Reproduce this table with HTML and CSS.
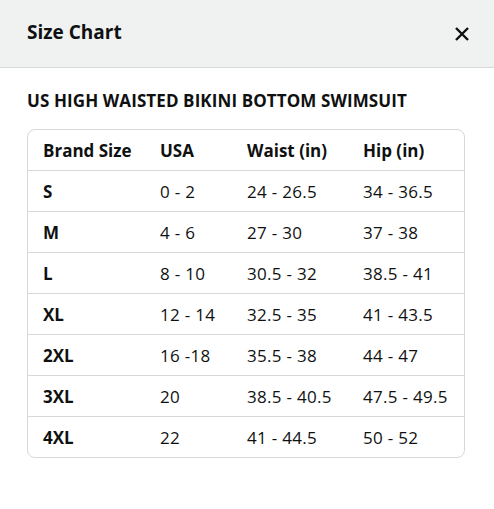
FILE: index.html
```html
<!DOCTYPE html>
<html lang="en">
<head>
    <meta charset="UTF-8">
    <meta name="viewport" content="width=device-width, initial-scale=1.0">
    <title>Size Chart</title>
    <link rel="stylesheet" href="styles.css">
</head>
<body>
    <div class="popover">
        <header class="popover-header">
            <h2>Size Chart</h2>
            <button class="close" aria-label="Close">
                <svg width="16" height="16" viewBox="0 0 16 16">
                    <path d="M2 2 L14 14 M14 2 L2 14" stroke="#0f1111" stroke-width="2.4" fill="none"/>
                </svg>
            </button>
        </header>
        <div class="popover-body">
            <h3 class="chart-title">US HIGH WAISTED BIKINI BOTTOM SWIMSUIT</h3>
            <div class="table-wrap">
                <table class="size-table">
                    <thead>
                        <tr>
                            <th class="c1">Brand Size</th>
                            <th class="c2">USA</th>
                            <th class="c3">Waist (in)</th>
                            <th class="c4">Hip (in)</th>
                        </tr>
                    </thead>
                    <tbody>
                        <tr><th>S</th><td>0 - 2</td><td>24 - 26.5</td><td>34 - 36.5</td></tr>
                        <tr><th>M</th><td>4 - 6</td><td>27 - 30</td><td>37 - 38</td></tr>
                        <tr><th>L</th><td>8 - 10</td><td>30.5 - 32</td><td>38.5 - 41</td></tr>
                        <tr><th>XL</th><td>12 - 14</td><td>32.5 - 35</td><td>41 - 43.5</td></tr>
                        <tr><th>2XL</th><td>16 -18</td><td>35.5 - 38</td><td>44 - 47</td></tr>
                        <tr><th>3XL</th><td>20</td><td>38.5 - 40.5</td><td>47.5 - 49.5</td></tr>
                        <tr><th>4XL</th><td>22</td><td>41 - 44.5</td><td>50 - 52</td></tr>
                    </tbody>
                </table>
            </div>
        </div>
    </div>
</body>
</html>
```

FILE: styles.css
```css
body{
    margin: 0;
    background: #fff;
    font-family: "Open Sans", "Noto Sans", sans-serif;
    color: #0f1111;
}
.popover-header{
    background-color: #f0f2f2;
    height: 67px;
    border-bottom: 1px solid #d5d9d9;
    display: flex;
    align-items: center;
    justify-content: space-between;
    padding: 0 24px 0 27px;
}
.popover-header h2{
    margin: 0;
    font-size: 19px;
    font-weight: 700;
    position: relative;
    top: -2px;
}
.close{
    background: none;
    border: none;
    padding: 0;
    width: 16px;
    height: 16px;
    cursor: pointer;
    display: flex;
}
.popover-body{
    padding: 21px 29px 0 27px;
}
.chart-title{
    margin: 0 0 17px;
    font-size: 17px;
    font-weight: 700;
    letter-spacing: 0.1px;
}
.table-wrap{
    border: 1px solid #d5d9d9;
    border-radius: 8px;
    overflow: hidden;
}
.size-table{
    width: 100%;
    border-collapse: collapse;
    font-size: 17px;
}
.size-table th,
.size-table td{
    text-align: left;
    height: 40px;
    padding: 0 0 0 15px;
    border-top: 1px solid #d5d9d9;
}
.size-table thead th{
    border-top: none;
}
.size-table th{
    font-weight: 700;
}
.size-table td{
    font-weight: 400;
    letter-spacing: 0.3px;
}
.c1{ width: 102px; }
.c2{ width: 72px; }
.c3{ width: 101px; }
```
